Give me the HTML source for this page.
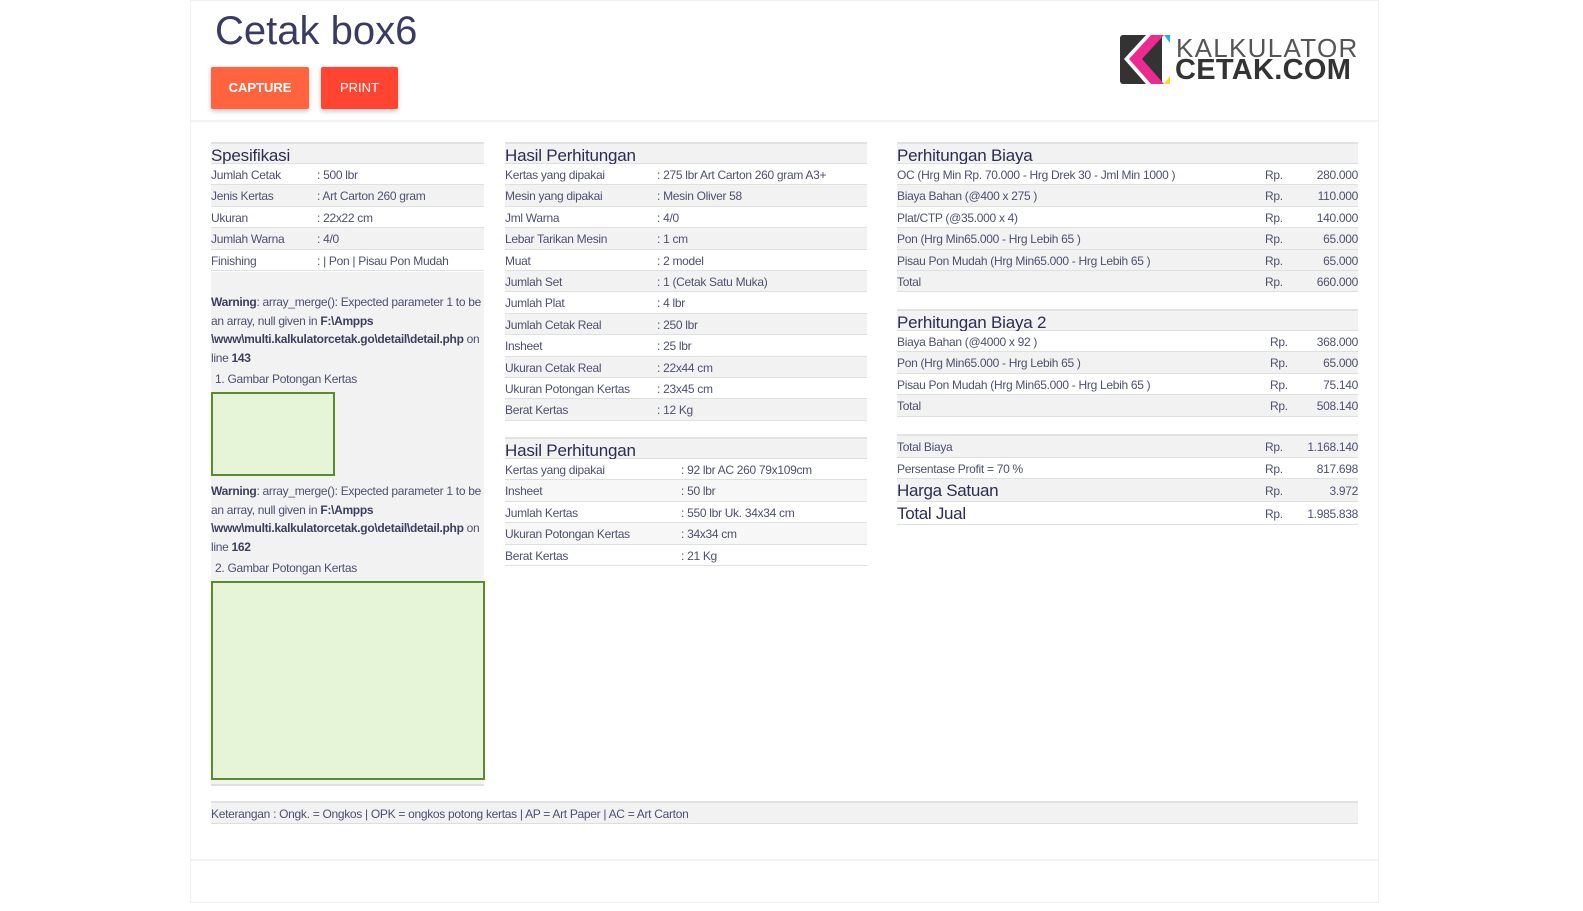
<!DOCTYPE html>
<html><head><meta charset="utf-8"><style>
*{margin:0;padding:0;box-sizing:border-box}
body{width:1583px;height:911px;background:#fff;font-family:"Liberation Sans",sans-serif;color:#4d5070;position:relative;overflow:hidden}
.card{position:absolute;left:190px;top:0;width:1189px;height:903px;border:1px solid #f0f0f0}
.abs{position:absolute}
.tbl{position:absolute}
.h{height:22px;background:#f2f2f2;border-top:2px solid #e2e2e2;border-bottom:1px solid #dedede;font-size:17px;color:#2c2d52;line-height:23px;letter-spacing:-0.2px}
.r{height:21.4px;border-bottom:1px solid #e0e0e0;font-size:12px;line-height:23px;letter-spacing:-0.3px;position:relative;white-space:nowrap}
.r span{position:absolute;top:0}
.rp{right:0;text-align:right}
.btn{position:absolute;top:67px;height:42px;color:#fff;font-size:13px;line-height:42px;text-align:center;border-radius:2px;box-shadow:0 2px 5px rgba(0,0,0,.25)}
.w{font-size:12px;line-height:18.5px;letter-spacing:-0.3px}
.w b{color:#3d3f5e}
.box{position:absolute;border:2px solid #5b8c2a;background:#e6f4d8}
</style></head><body>
<div class="card"></div>
<div class="abs" style="left:191px;top:120px;width:1187px;height:2px;background:#f3f3f3"></div>
<div class="abs" style="left:191px;top:859px;width:1187px;height:2px;background:#f3f3f3"></div>
<div class="abs" style="left:215px;top:9px;font-size:40px;color:#3a3b62;letter-spacing:0px">Cetak box6</div>
<div class="btn" style="left:211px;width:98px;background:#ff643f;font-weight:bold">CAPTURE</div>
<div class="btn" style="left:321px;width:77px;background:#ff4431">PRINT</div>
<svg class="abs" style="left:1120px;top:34px" width="52" height="51" viewBox="0 0 52 51">
<rect x="0" y="1" width="42" height="49" rx="3" fill="#333"/>
<polygon points="26,1 42,1 20,25 42,50 26,50 4,25" fill="#fff"/>
<polygon points="31,1 44,1 22,25 44,50 31,50 9,25" fill="#ec2a90"/>
<polygon points="44,1 50,1 50,9" fill="#1eb4e6"/>
<polygon points="44,50 50,50 50,42" fill="#f5e014"/>
</svg>
<div class="abs" style="left:1176px;top:33px;font-size:26px;color:#555;letter-spacing:1.3px">KALKULATOR</div>
<div class="abs" style="left:1175px;top:54px;font-size:29px;color:#333;font-weight:bold;letter-spacing:0.3px">CETAK.COM</div>

<div class="abs" style="left:211px;top:272px;width:273px;height:514px;background:#f2f2f2;border-bottom:2px solid #e0e0e0"></div>
<div class="tbl" style="left:211px;top:142px;width:273px">
<div class="h">Spesifikasi</div>
<div class="r" style="background:#fff"><span>Jumlah Cetak</span><span style="left:106px">: 500 lbr</span></div>
<div class="r" style="background:#f2f2f2"><span>Jenis Kertas</span><span style="left:106px">: Art Carton 260 gram</span></div>
<div class="r" style="background:#fff"><span>Ukuran</span><span style="left:106px">: 22x22 cm</span></div>
<div class="r" style="background:#f2f2f2"><span>Jumlah Warna</span><span style="left:106px">: 4/0</span></div>
<div class="r" style="background:#fff"><span>Finishing</span><span style="left:106px">: | Pon | Pisau Pon Mudah</span></div>
</div>
<div class="abs w" style="left:211px;top:293px;width:273px"><b>Warning</b>: array_merge(): Expected parameter 1 to be an array, null given in <b>F:\Ampps \www\multi.kalkulatorcetak.go\detail\detail.php</b> on line <b>143</b></div>
<div class="abs w" style="left:215px;top:370px">1. Gambar Potongan Kertas</div>
<div class="box" style="left:211px;top:392px;width:124px;height:84px"></div>
<div class="abs w" style="left:211px;top:482px;width:273px"><b>Warning</b>: array_merge(): Expected parameter 1 to be an array, null given in <b>F:\Ampps \www\multi.kalkulatorcetak.go\detail\detail.php</b> on line <b>162</b></div>
<div class="abs w" style="left:215px;top:559px">2. Gambar Potongan Kertas</div>
<div class="box" style="left:211px;top:581px;width:274px;height:199px"></div>

<div class="tbl" style="left:505px;top:142px;width:362px">
<div class="h">Hasil Perhitungan</div>
<div class="r" style="background:#fff"><span>Kertas yang dipakai</span><span style="left:152px">: 275 lbr Art Carton 260 gram A3+</span></div>
<div class="r" style="background:#f2f2f2"><span>Mesin yang dipakai</span><span style="left:152px">: Mesin Oliver 58</span></div>
<div class="r" style="background:#fff"><span>Jml Warna</span><span style="left:152px">: 4/0</span></div>
<div class="r" style="background:#f2f2f2"><span>Lebar Tarikan Mesin</span><span style="left:152px">: 1 cm</span></div>
<div class="r" style="background:#fff"><span>Muat</span><span style="left:152px">: 2 model</span></div>
<div class="r" style="background:#f2f2f2"><span>Jumlah Set</span><span style="left:152px">: 1 (Cetak Satu Muka)</span></div>
<div class="r" style="background:#fff"><span>Jumlah Plat</span><span style="left:152px">: 4 lbr</span></div>
<div class="r" style="background:#f2f2f2"><span>Jumlah Cetak Real</span><span style="left:152px">: 250 lbr</span></div>
<div class="r" style="background:#fff"><span>Insheet</span><span style="left:152px">: 25 lbr</span></div>
<div class="r" style="background:#f2f2f2"><span>Ukuran Cetak Real</span><span style="left:152px">: 22x44 cm</span></div>
<div class="r" style="background:#fff"><span>Ukuran Potongan Kertas</span><span style="left:152px">: 23x45 cm</span></div>
<div class="r" style="background:#f2f2f2"><span>Berat Kertas</span><span style="left:152px">: 12 Kg</span></div>
</div>
<div class="tbl" style="left:505px;top:437px;width:362px">
<div class="h">Hasil Perhitungan</div>
<div class="r" style="background:#fff"><span>Kertas yang dipakai</span><span style="left:176px">: 92 lbr AC 260 79x109cm</span></div>
<div class="r" style="background:#f7f7f7"><span>Insheet</span><span style="left:176px">: 50 lbr</span></div>
<div class="r" style="background:#fff"><span>Jumlah Kertas</span><span style="left:176px">: 550 lbr Uk. 34x34 cm</span></div>
<div class="r" style="background:#f7f7f7"><span>Ukuran Potongan Kertas</span><span style="left:176px">: 34x34 cm</span></div>
<div class="r" style="background:#fff"><span>Berat Kertas</span><span style="left:176px">: 21 Kg</span></div>
</div>

<div class="tbl" style="left:897px;top:142px;width:461px">
<div class="h">Perhitungan Biaya</div>
<div class="r" style="background:#fff"><span>OC (Hrg Min Rp. 70.000 - Hrg Drek 30 - Jml Min 1000 )</span><span style="left:368px">Rp.</span><span class="rp">280.000</span></div>
<div class="r" style="background:#f2f2f2"><span>Biaya Bahan (@400 x 275 )</span><span style="left:368px">Rp.</span><span class="rp">110.000</span></div>
<div class="r" style="background:#fff"><span>Plat/CTP (@35.000 x 4)</span><span style="left:368px">Rp.</span><span class="rp">140.000</span></div>
<div class="r" style="background:#f2f2f2"><span>Pon (Hrg Min65.000 - Hrg Lebih 65 )</span><span style="left:368px">Rp.</span><span class="rp">65.000</span></div>
<div class="r" style="background:#f2f2f2"><span>Pisau Pon Mudah (Hrg Min65.000 - Hrg Lebih 65 )</span><span style="left:368px">Rp.</span><span class="rp">65.000</span></div>
<div class="r" style="background:#f2f2f2"><span>Total</span><span style="left:368px">Rp.</span><span class="rp">660.000</span></div>
</div>
<div class="tbl" style="left:897px;top:309px;width:461px">
<div class="h">Perhitungan Biaya 2</div>
<div class="r" style="background:#fff"><span>Biaya Bahan (@4000 x 92 )</span><span style="left:373px">Rp.</span><span class="rp">368.000</span></div>
<div class="r" style="background:#f2f2f2"><span>Pon (Hrg Min65.000 - Hrg Lebih 65 )</span><span style="left:373px">Rp.</span><span class="rp">65.000</span></div>
<div class="r" style="background:#fff"><span>Pisau Pon Mudah (Hrg Min65.000 - Hrg Lebih 65 )</span><span style="left:373px">Rp.</span><span class="rp">75.140</span></div>
<div class="r" style="background:#f2f2f2"><span>Total</span><span style="left:373px">Rp.</span><span class="rp">508.140</span></div>
</div>
<div class="tbl" style="left:897px;top:434px;width:461px;border-top:2px solid #e2e2e2">
<div class="r" style="background:#f2f2f2;height:21.5px"><span>Total Biaya</span><span style="left:368px">Rp.</span><span class="rp">1.168.140</span></div>
<div class="r" style="background:#fff;height:21.5px"><span>Persentase Profit = 70 %</span><span style="left:368px">Rp.</span><span class="rp">817.698</span></div>
<div class="r" style="background:#f2f2f2;height:23px"><span style="font-size:17px;color:#2c2d52;line-height:24px">Harga Satuan</span><span style="left:368px;line-height:25px">Rp.</span><span class="rp" style="line-height:25px">3.972</span></div>
<div class="r" style="background:#fff;height:23px"><span style="font-size:17px;color:#2c2d52;line-height:24px">Total Jual</span><span style="left:368px;line-height:25px">Rp.</span><span class="rp" style="line-height:25px">1.985.838</span></div>
</div>

<div class="abs" style="left:211px;top:801px;width:1147px;height:23px;background:#f2f2f2;border-top:2px solid #e2e2e2;border-bottom:1px solid #dedede;font-size:12px;line-height:22px;letter-spacing:-0.3px">Keterangan : Ongk. = Ongkos | OPK = ongkos potong kertas | AP = Art Paper | AC = Art Carton</div>
</body></html>
